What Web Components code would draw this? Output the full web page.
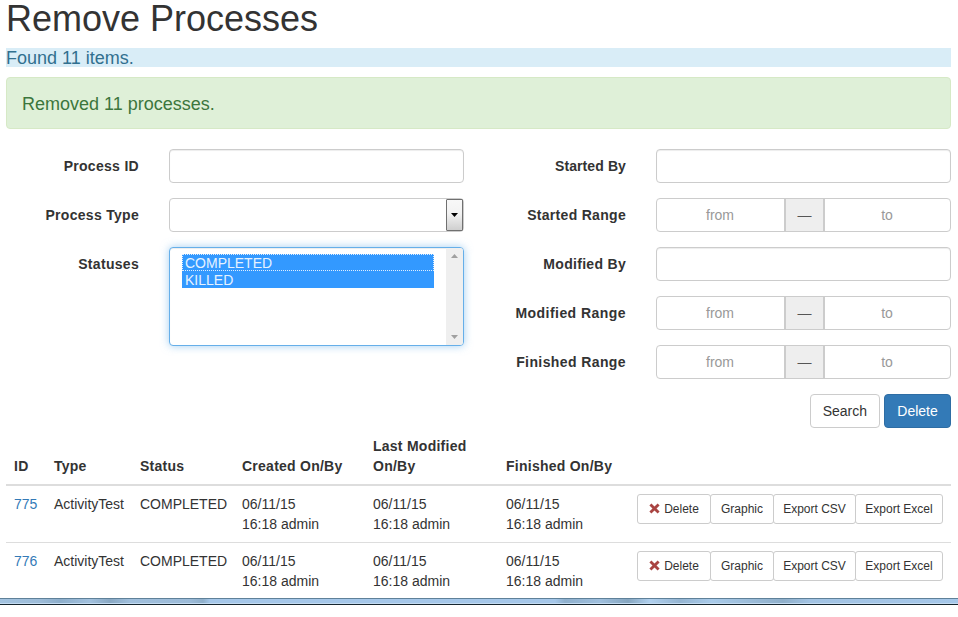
<!DOCTYPE html>
<html lang="en"><head><meta charset="utf-8"><title>Remove Processes</title>
<style>
html,body{margin:0;background:#fff}
body{font:14px/20px "Liberation Sans",Arial,sans-serif;color:#333}
</style></head><body>
<x-page>
  <x-title>Remove Processes</x-title>
  <x-info>Found 11 items.</x-info>
  <x-alert>Removed 11 processes.</x-alert>
  <x-form>
    <x-column>
      <x-field label="Process ID"><x-input></x-input></x-field>
      <x-field label="Process Type"><x-select></x-select></x-field>
      <x-field label="Statuses"><x-listbox><x-option focused>COMPLETED</x-option><x-option>KILLED</x-option></x-listbox></x-field>
    </x-column>
    <x-column>
      <x-field label="Started By" style="--ls:.1px"><x-input></x-input></x-field>
      <x-field label="Started Range"><x-range></x-range></x-field>
      <x-field label="Modified By"><x-input></x-input></x-field>
      <x-field label="Modified Range" style="--ls:.45px"><x-range></x-range></x-field>
      <x-field label="Finished Range" style="--ls:.4px"><x-range></x-range></x-field>
    </x-column>
  </x-form>
  <x-actions><x-btn>Search</x-btn><x-btn primary>Delete</x-btn></x-actions>
  <x-row head>
    <span>ID</span><span>Type</span><span>Status</span><span>Created On/By</span><span>Last Modified<br>On/By</span><span>Finished On/By</span><span></span>
  </x-row>
  <x-row>
    <a href="#">775</a><span>ActivityTest</span><span>COMPLETED</span><span>06/11/15<br>16:18 admin</span><span>06/11/15<br>16:18 admin</span><span>06/11/15<br>16:18 admin</span>
    <x-toolbar></x-toolbar>
  </x-row>
  <x-row last>
    <a href="#">776</a><span>ActivityTest</span><span>COMPLETED</span><span>06/11/15<br>16:18 admin</span><span>06/11/15<br>16:18 admin</span><span>06/11/15<br>16:18 admin</span>
    <x-toolbar></x-toolbar>
  </x-row>
</x-page>
<x-taskbar></x-taskbar>
<script>
function def(name, css, html, extra){
  customElements.define(name, class extends HTMLElement{
    constructor(){super();this.attachShadow({mode:'open'}).innerHTML='<style>'+css+'</style>'+(typeof html==='function'?html(this):html);}
    connectedCallback(){ if(typeof html==='function' && extra) this.shadowRoot.innerHTML='<style>'+css+'</style>'+html(this); }
  });
}
def('x-page',':host{display:block;height:598px;box-sizing:border-box;padding:0 7px 0 6px}','<slot></slot>');
def('x-title',':host{display:block;font-size:36px;line-height:36px;height:35px;padding-top:1px;margin-bottom:12px}','<slot></slot>');
def('x-info',':host{display:block;background:#d9edf7;color:#31708f;font-size:18px;line-height:21px;height:19px;margin-bottom:10px}','<slot></slot>');
def('x-alert',':host{display:block;box-sizing:border-box;height:52px;padding:16px 15px 14px;background:#dff0d8;border:1px solid #d6e9c6;border-radius:4px;color:#3c763d;font-size:18px;line-height:20px;margin-bottom:20px}','<slot></slot>');
def('x-form',':host{display:grid;grid-template-columns:458px 458px;column-gap:29px}','<slot></slot>');
def('x-column',':host{display:flex;flex-direction:column;gap:15px}','<slot></slot>');
def('x-field',':host{display:grid;grid-template-columns:133px 295px;column-gap:30px;align-items:start}.l{font-weight:700;text-align:right;line-height:34px;letter-spacing:var(--ls,.3px);white-space:nowrap}',
  h=>'<div class="l">'+(h.getAttribute('label')||'')+'</div><div><slot></slot></div>',true);
def('x-input',':host{display:block;box-sizing:border-box;height:34px;background:#fff;border:1px solid #ccc;border-radius:4px;box-shadow:inset 0 1px 1px rgba(0,0,0,.075)}','');
def('x-select',`:host{display:flex;justify-content:flex-end;box-sizing:border-box;height:34px;background:#fff;border:1px solid #ccc;border-radius:4px;padding:0}
 .b{box-sizing:border-box;width:17px;height:32px;border:1px solid #707070;border-radius:1px;background:linear-gradient(#f8f8f8,#f2f2f2 45%,#cfcfcf);display:flex;align-items:center;justify-content:center}`,
 '<div class="b"><svg width="7" height="4" viewBox="0 0 7 4"><path d="M0 0H7L3.5 4Z" fill="#000"/></svg></div>');
def('x-listbox',`:host{display:flex;box-sizing:border-box;height:99px;background:#fff;border:1px solid #66afe9;border-radius:4px;box-shadow:inset 0 1px 1px rgba(0,0,0,.075),0 0 8px rgba(102,175,233,.6)}
 .o{flex:1;padding:6px 12px 0}.s{width:17px;background:#efefef;display:flex;flex-direction:column;justify-content:space-between;align-items:center;padding:6px 0;box-sizing:border-box;border-radius:0 3px 3px 0}`,
 '<div class="o"><slot></slot></div><div class="s"><svg width="7" height="4" viewBox="0 0 7 4"><path d="M0 4H7L3.5 0Z" fill="#a0a0a0"/></svg><svg width="7" height="4" viewBox="0 0 7 4"><path d="M0 0H7L3.5 4Z" fill="#a0a0a0"/></svg></div>');
def('x-option',`:host{display:block;box-sizing:border-box;height:17px;line-height:19px;background:#39f;color:#e6f2ff;padding:0 3px;white-space:nowrap;overflow:visible}
 :host([focused]){outline:1px dotted #dfeeff;outline-offset:-1px}`,'<slot></slot>');
def('x-range',`:host{display:flex;box-sizing:border-box;height:34px;border:1px solid #ccc;border-radius:4px;color:#999;text-align:center;line-height:32px}
 .f{box-sizing:border-box;width:127px;padding-right:1px}.a{box-sizing:border-box;width:41px;background:#eee;border-left:2px solid #ccc;border-right:2px solid #ccc;color:#555}.t{flex:1;padding-right:1px}`,
 '<div class="f">from</div><div class="a">—</div><div class="t">to</div>');
def('x-actions',':host{display:flex;justify-content:flex-end;gap:4px;margin-top:15px}','<slot></slot>');
def('x-btn',`:host{display:block;box-sizing:border-box;height:34px;min-width:67px;text-align:center;padding:6px 12px;border:1px solid #ccc;border-radius:4px;background:#fff;color:#333;line-height:20px}
 :host([primary]){background:#337ab7;border-color:#2e6da4;color:#fff}`,'<slot></slot>');
def('x-row',`:host{display:grid;grid-template-columns:40px 86px 102px 131px 133px 131px 322px;border-bottom:1px solid #ddd;box-sizing:border-box;height:57px}
 :host([head]){height:58px;align-items:end;border-bottom:2px solid #ddd;font-weight:700;letter-spacing:.25px}
 :host([last]){height:55px;border-bottom:0}
 ::slotted(*){padding:8px;min-width:0;text-decoration:none}
 ::slotted(a){color:#337ab7}`,'<slot></slot>');
def('x-toolbar',`:host{display:flex;padding:8px!important}
 .b{box-sizing:border-box;height:30px;border:1px solid #ccc;border-radius:3px;background:#fff;font-size:12px;line-height:18px;color:#333;white-space:nowrap;margin-right:-1px;display:flex;align-items:center;justify-content:center;gap:4px}
 svg{display:block;margin-top:-1px}`,
 '<div class="b" style="width:74px"><svg width="11" height="11" viewBox="0 0 11 11"><path d="M.4 2.4 2.4.4 5.5 3.5 8.6.4l2 2L7.5 5.5l3.1 3.1-2 2L5.5 7.5l-3.1 3.1-2-2L3.5 5.5Z" fill="#a94442"/></svg>Delete</div><div class="b" style="width:64px">Graphic</div><div class="b" style="width:83px">Export CSV</div><div class="b" style="width:88px">Export Excel</div>');
def('x-taskbar',`:host{display:block;box-sizing:border-box;height:7px;border-top:1px solid #5f8199;border-bottom:1px solid #16262f;
 background:linear-gradient(#c4dcf2,#c4dcf2) 0 100%/100% 1px no-repeat,linear-gradient(90deg,#a3c3e0 0,#9dbcd8 40px,#8daecb 60px,#a2c1de 90px,#89a8c3 110px,#a0bfdc 130px,#9cbbd8 190px,#8fafca 203px,#a5c7e9 210px,#a5c7e9 555px,#8fb0cd 565px,#9fbfdd 600px,#86a6c0 628px,#b0d0ee 650px,#95b5d2 680px,#a9cbea 712px,#8fafca 783px,#a2c3e3 810px,#a5c7e9 958px)}`,'');
</script>
</body></html>
